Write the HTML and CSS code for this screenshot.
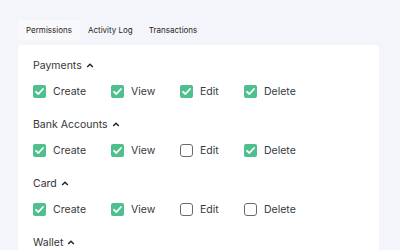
FILE: index.html
```html
<!DOCTYPE html>
<html lang="en">
<head>
  <meta charset="UTF-8" />
  <title>Permissions</title>
  <link rel="stylesheet" href="styles.css">
</head>
<body>
  <div class="tabs">
    <div class="tab active">Permissions</div>
    <div class="tab">Activity Log</div>
    <div class="tab">Transactions</div>
  </div>

  <div class="panel">
    <div class="section">
      <div class="heading">Payments <svg class="chev" viewBox="0 0 10 6"><path d="M1.5 5 L5 1.5 L8.5 5" /></svg></div>
      <div class="row">
        <label class="item"><span class="box on"></span>Create</label>
        <label class="item"><span class="box on"></span>View</label>
        <label class="item"><span class="box on"></span>Edit</label>
        <label class="item"><span class="box on"></span>Delete</label>
      </div>
    </div>

    <div class="section">
      <div class="heading">Bank Accounts <svg class="chev" viewBox="0 0 10 6"><path d="M1.5 5 L5 1.5 L8.5 5" /></svg></div>
      <div class="row">
        <label class="item"><span class="box on"></span>Create</label>
        <label class="item"><span class="box on"></span>View</label>
        <label class="item"><span class="box"></span>Edit</label>
        <label class="item"><span class="box on"></span>Delete</label>
      </div>
    </div>

    <div class="section">
      <div class="heading">Card <svg class="chev" viewBox="0 0 10 6"><path d="M1.5 5 L5 1.5 L8.5 5" /></svg></div>
      <div class="row">
        <label class="item"><span class="box on"></span>Create</label>
        <label class="item"><span class="box on"></span>View</label>
        <label class="item"><span class="box"></span>Edit</label>
        <label class="item"><span class="box"></span>Delete</label>
      </div>
    </div>

    <div class="section">
      <div class="heading">Wallet <svg class="chev" viewBox="0 0 10 6"><path d="M1.5 5 L5 1.5 L8.5 5" /></svg></div>
    </div>
  </div>
</body>
</html>
```

FILE: styles.css
```css
* {
  box-sizing: border-box;
}

body {
  margin: 0;
  padding: 20px 20px 0 18px;
  background: #f4f5fa;
  font-family: 'Inter', sans-serif;
  color: #2f2f33;
  overflow: hidden;
}

.tabs {
  display: flex;
  height: 20px;
  margin-bottom: 5px;
}

.tab {
  padding: 0 8px;
  font-size: 8px;
  line-height: 20px;
  color: #1f1f23;
}

.active {
  background: #f9f9fc;
}

.panel {
  width: 361px;
  background: #ffffff;
  border-radius: 4px;
  padding: 13px 15px 20px;
}

.section {
  margin-bottom: 19px;
}

.heading {
  display: flex;
  align-items: center;
  height: 14px;
  font-size: 10.5px;
  color: #333338;
}

.chev {
  width: 8px;
  height: 5px;
  margin-left: 4px;
  fill: none;
  stroke: #222;
  stroke-width: 1.8;
}

.row {
  display: grid;
  grid-template-columns: 78px 69px 64px auto;
  margin-top: 12px;
  height: 14px;
}

.item {
  display: flex;
  align-items: center;
  font-size: 10.5px;
  color: #38383d;
}

.box {
  width: 13px;
  height: 13px;
  margin-right: 7px;
  border: 1px solid #6a6a70;
  border-radius: 3px;
}

.box.on {
  border: none;
  border-radius: 2px;
  background: #4fbf8e url("data:image/svg+xml,%3Csvg xmlns='http://www.w3.org/2000/svg' viewBox='0 0 13 13'%3E%3Cpath d='M3 6.8 L5.4 9 L10 4' fill='none' stroke='white' stroke-width='1.8' stroke-linecap='round' stroke-linejoin='round'/%3E%3C/svg%3E") center / 13px 13px no-repeat;
}
```
